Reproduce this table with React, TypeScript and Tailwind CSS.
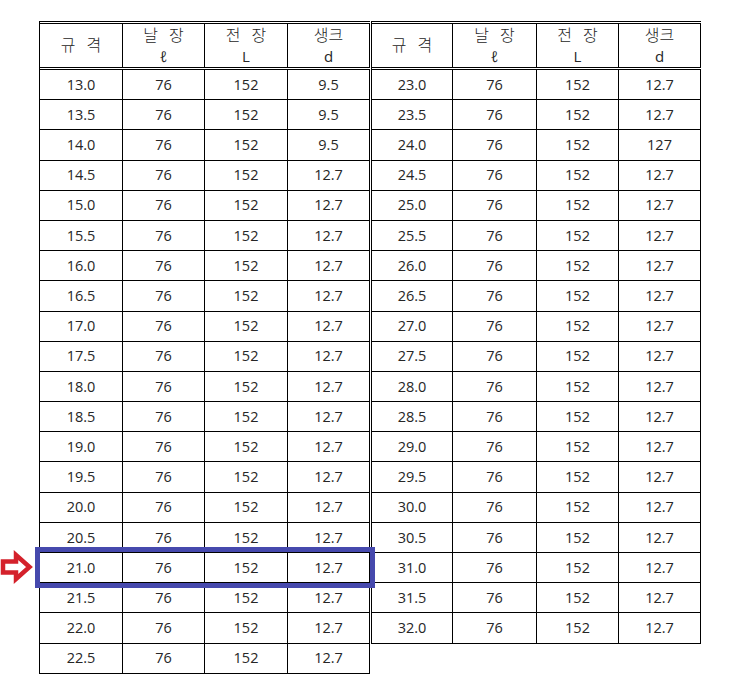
import React from 'react';

type Row = [string, string, string, string];

const leftRows: Row[] = [
  '13.0', '13.5', '14.0', '14.5', '15.0', '15.5', '16.0', '16.5', '17.0', '17.5',
  '18.0', '18.5', '19.0', '19.5', '20.0', '20.5', '21.0', '21.5', '22.0', '22.5',
].map((size, i) => [size, '76', '152', i < 3 ? '9.5' : '12.7']);

const rightRows: Row[] = [
  '23.0', '23.5', '24.0', '24.5', '25.0', '25.5', '26.0', '26.5', '27.0', '27.5',
  '28.0', '28.5', '29.0', '29.5', '30.0', '30.5', '31.0', '31.5', '32.0',
].map((size) => [size, '76', '152', size === '24.0' ? '127' : '12.7']);

const headers: [string, string?][] = [['규 격'], ['날 장', 'ℓ'], ['전 장', 'L'], ['생크', 'd']];

function SpecTable({ rows, widths }: { rows: Row[]; widths: number[] }) {
  return (
    <div className="border-l border-black">
      <div className="flex h-[49px] border-t-[3px] border-b-[3px] border-double border-black">
        {headers.map(([top, bottom], i) => (
          <div
            key={top}
            style={{ width: widths[i] }}
            className="flex flex-col items-center justify-center border-r border-solid border-black leading-[21px]"
          >
            <span className="text-[16px] font-light [word-spacing:7px]">{top}</span>
            {bottom && <span className="text-[15px]">{bottom}</span>}
          </div>
        ))}
      </div>
      {rows.map((row) => (
        <div key={row[0]} className="flex h-[30.2px] border-b border-black">
          {row.map((cell, i) => (
            <div
              key={i}
              style={{ width: widths[i] }}
              className="flex items-center justify-center border-r border-black text-[14.5px]"
            >
              {cell}
            </div>
          ))}
        </div>
      ))}
    </div>
  );
}

export default function App() {
  return (
    <div
      className="relative h-[689px] w-[740px] bg-white text-[#262626]"
      style={{ fontFamily: '"Open Sans", "Noto Sans CJK KR", sans-serif' }}
    >
      <div className="flex items-start pl-[39px] pt-[21px]">
        <SpecTable rows={leftRows} widths={[83, 82, 83, 82]} />
        <div className="w-px" />
        <SpecTable rows={rightRows} widths={[81, 84, 82, 82]} />
      </div>

      <svg className="absolute left-0 top-[550px]" width="34" height="34" viewBox="0 0 34 34">
        <polygon
          points="3,11.5 16,11.5 16,5 29.5,17 16,29 16,22.5 3,22.5"
          fill="#fff"
          stroke="#d4212b"
          strokeWidth="4.5"
          strokeLinejoin="miter"
        />
      </svg>

      <div className="absolute left-[35px] top-[547px] h-[41px] w-[340px] border-[5px] border-[#4649ad]" />
    </div>
  );
}
